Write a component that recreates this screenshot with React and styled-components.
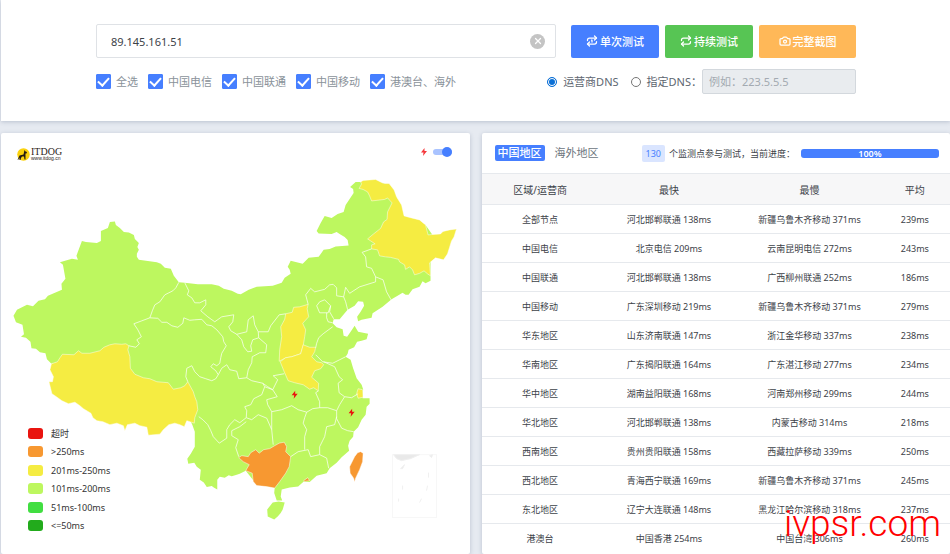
import React, { useState } from 'react';
import styled, { createGlobalStyle, css } from 'styled-components';
import { Repeat, Repeat1, Camera, X } from 'lucide-react';

const GlobalStyle = createGlobalStyle`
  * {
    box-sizing: border-box;
  }
  body {
    margin: 0;
    background: #e6eaf1;
    color: #3c4248;
    font-family: "Noto Sans", "Noto Sans CJK SC", sans-serif;
    font-size: 9px;
  }
  button, input {
    font-family: inherit;
  }
`;

const blue = '#467fff';

const palette = {
  timeout: '#e9140f',
  slow: '#f79831',
  medium: '#f5ec42',
  good: '#bdf75f',
  fast: '#41de41',
  best: '#22ab1c',
};

const Page = styled.div`
  display: flex;
  flex-direction: column;
  gap: 12px;
  min-height: 100vh;
  padding-left: 1px;
  overflow: hidden;
`;

const cardcss = css`
  background: #fff;
  box-shadow: 0 1px 4px rgba(60, 75, 110, 0.25);
`;

const SearchCard = styled.header`
  ${cardcss};
  padding: 24px 94px 27px 95px;
`;

const SearchInner = styled.div`
  display: flex;
  flex-direction: column;
  gap: 11px;
`;

const SearchRow = styled.form`
  display: flex;
  align-items: center;
  gap: 15px;
`;

const HostBox = styled.div`
  display: flex;
  align-items: center;
  flex: 1;
  height: 34px;
  padding: 0 10px 0 14px;
  border: 1px solid #dfe2e6;
  border-radius: 2px;
`;

const HostInput = styled.input`
  flex: 1;
  min-width: 0;
  padding: 0;
  border: 0;
  outline: none;
  color: #3c4248;
  font-size: 11px;
`;

const ClearButton = styled.button`
  display: flex;
  align-items: center;
  justify-content: center;
  width: 15px;
  height: 15px;
  padding: 0;
  border: 0;
  border-radius: 50%;
  background: #c4c4c4;
  color: #fff;
`;

const ButtonGroup = styled.div`
  display: flex;
  gap: 6px;
`;

const ActionButton = styled.button`
  display: flex;
  align-items: center;
  justify-content: center;
  gap: 2px;
  width: ${(props) => (props.$wide ? '97px' : '88px')};
  height: 33px;
  padding: 0;
  border: 0;
  border-radius: 2px;
  background: ${(props) => props.$color};
  color: #fff;
  font-size: 11px;
  font-weight: 500;
  cursor: pointer;
`;

const OptionRow = styled.div`
  display: flex;
  align-items: center;
  justify-content: space-between;
`;

const OptionGroup = styled.div`
  display: flex;
  align-items: center;
  gap: ${(props) => props.$gap};
`;

const Option = styled.label`
  display: flex;
  align-items: center;
  gap: ${(props) => (props.$radio ? '6px' : '5px')};
  color: ${(props) => (props.$radio ? '#5d6670' : '#8a929a')};
  font-size: 11px;
  line-height: 16px;
  white-space: nowrap;
`;

const Checkbox = styled.input`
  display: flex;
  justify-content: center;
  appearance: none;
  width: 15px;
  height: 15px;
  margin: 0;
  border-radius: 1px;
  border: 1px solid ${blue};
  background: #fff;
  &:checked {
    background: ${blue};
  }
  &:checked::after {
    content: "";
    width: 5px;
    height: 9px;
    border: solid #fff;
    border-width: 0 2px 2px 0;
    transform: rotate(42deg);
  }
`;

const Radio = styled.input`
  appearance: none;
  width: 10px;
  height: 10px;
  margin: 0;
  border: 1px solid #767676;
  border-radius: 50%;
  &:checked {
    border-color: #0a6fd6;
    background: #0a6fd6;
    box-shadow: inset 0 0 0 1px #fff;
  }
`;

// pulled left over the blank half of the full-width colon
const DnsInput = styled.input`
  width: 154px;
  height: 25px;
  margin-left: -12px;
  padding: 0 6px;
  border: 1px solid #d3d8dd;
  border-radius: 2px;
  background: #e9ecef;
  font-size: 11px;
  &::placeholder {
    color: #a3aab1;
  }
`;

const Panels = styled.main`
  display: grid;
  grid-template-columns: minmax(0, 1fr) minmax(0, 1fr);
  gap: 12px;
  flex: 1;
`;

const Panel = styled.section`
  ${cardcss};
  position: relative;
  border-radius: 2px;
`;

const MapSvg = styled.svg`
  display: block;
  width: 100%;
`;

const MapHead = styled.div`
  position: absolute;
  top: 14px;
  left: 16px;
  right: 18px;
  display: flex;
  align-items: center;
  justify-content: space-between;
`;

const Brand = styled.a`
  display: flex;
  align-items: center;
  gap: 1px;
  color: #2b2320;
  text-decoration: none;
`;

const BrandText = styled.span`
  display: flex;
  flex-direction: column;
  font-family: "Liberation Serif", serif;
  font-size: 10px;
  line-height: 9px;
  small {
    font-family: "Liberation Sans", sans-serif;
    font-size: 5px;
    line-height: 5px;
  }
`;

const SwitchLabel = styled.label`
  display: flex;
  align-items: center;
  gap: 5px;
  margin-bottom: 4px;
`;

const Switch = styled.input`
  appearance: none;
  display: flex;
  align-items: center;
  width: 19px;
  height: 6px;
  margin: 0;
  border-radius: 3px;
  background: ${(props) => (props.checked ? '#a9c3ff' : '#cfd4da')};
  &::after {
    content: "";
    flex: none;
    width: 10px;
    height: 10px;
    border-radius: 50%;
    margin-left: ${(props) => (props.checked ? '9px' : '0')};
    background: ${(props) => (props.checked ? blue : '#fff')};
  }
`;

const Legend = styled.ul`
  position: absolute;
  left: 27px;
  top: 293px;
  display: flex;
  flex-direction: column;
  gap: 4px;
  margin: 0;
  padding: 0;
  list-style: none;
`;

const LegendItem = styled.li`
  display: flex;
  align-items: center;
  gap: 8px;
  height: ${(props) => (props.$tall ? '15px' : '14px')};
  color: #333;
  &::before {
    content: "";
    width: 15px;
    height: 11px;
    border-radius: 3px;
    background: ${(props) => props.$color};
  }
`;

const ResultHead = styled.div`
  display: flex;
  align-items: center;
  height: 40px;
  padding: 0 11px 0 13px;
`;

const Tab = styled.button`
  height: 16px;
  padding: 0 3px;
  margin-right: 7px;
  border: 0;
  border-radius: 2px;
  background: ${(props) => (props.$active ? blue : 'none')};
  color: ${(props) => (props.$active ? '#fff' : '#6c757d')};
  font-size: 11px;
  font-weight: ${(props) => (props.$active ? 500 : 400)};
  line-height: 16px;
  white-space: nowrap;
  cursor: pointer;
`;

const Progress = styled.div`
  display: flex;
  align-items: center;
  flex: 1;
  gap: 4px;
  margin-left: 33px;
  white-space: nowrap;
`;

const Count = styled.span`
  padding: 0 4px;
  border-radius: 2px;
  background: #dae5ff;
  color: ${blue};
  line-height: 17px;
`;

const Bar = styled.div`
  flex: 1;
  margin-left: 2px;
  border-radius: 3px;
  background: #e9ecef;
`;

const BarFill = styled.div`
  height: 9px;
  border-radius: 3px;
  background: ${blue};
  color: #fff;
  font-weight: 600;
  line-height: 9px;
  text-align: center;
`;

const ResultTable = styled.table`
  width: 100%;
  border-collapse: collapse;
  table-layout: fixed;
  text-align: center;
  th, td {
    height: 29px;
    padding: 0;
    border-top: 1px solid #e6e9ed;
    white-space: nowrap;
  }
  th {
    height: 31px;
    background: #f7f7f8;
    font-size: 10px;
    font-weight: 400;
  }
`;

const Col = styled.col`
  width: ${(props) => props.$width};
`;

const Watermark = styled.div`
  position: absolute;
  right: 9px;
  bottom: 10px;
  color: #f00;
  font-family: Roboto, sans-serif;
  font-size: 37px;
  font-weight: 300;
  line-height: 40px;
`;

const carriers = ['全选', '中国电信', '中国联通', '中国移动', '港澳台、海外'];

const legend = [
  { color: palette.timeout, text: '超时' },
  { color: palette.slow, text: '>250ms' },
  { color: palette.medium, text: '201ms-250ms' },
  { color: palette.good, text: '101ms-200ms' },
  { color: palette.fast, text: '51ms-100ms' },
  { color: palette.best, text: '<=50ms' },
];

const results = [
  ['全部节点', '河北邯郸联通 138ms', '新疆乌鲁木齐移动 371ms', '239ms'],
  ['中国电信', '北京电信 209ms', '云南昆明电信 272ms', '243ms'],
  ['中国联通', '河北邯郸联通 138ms', '广西柳州联通 252ms', '186ms'],
  ['中国移动', '广东深圳移动 219ms', '新疆乌鲁木齐移动 371ms', '279ms'],
  ['华东地区', '山东济南联通 147ms', '浙江金华移动 337ms', '238ms'],
  ['华南地区', '广东揭阳联通 164ms', '广东湛江移动 277ms', '234ms'],
  ['华中地区', '湖南益阳联通 168ms', '河南郑州移动 299ms', '244ms'],
  ['华北地区', '河北邯郸联通 138ms', '内蒙古移动 314ms', '218ms'],
  ['西南地区', '贵州贵阳联通 158ms', '西藏拉萨移动 339ms', '250ms'],
  ['西北地区', '青海西宁联通 169ms', '新疆乌鲁木齐移动 371ms', '245ms'],
  ['东北地区', '辽宁大连联通 148ms', '黑龙江哈尔滨移动 318ms', '237ms'],
  ['港澳台', '中国香港 254ms', '中国台湾 306ms', '260ms'],
];

// outline of the mainland, clockwise from the northern tip of Xinjiang
const mainland = `M110 222L115 221.5 116 225 120 228 124 232 129 232.5 134 235 135 239 139 243 137.500 247
  139 250 137 254 137 257 139 260 157 262.5 161 264 165 268 171 269 174 276 179 282.500 185 283 198 284.500
  212 284.500 219 286 224 289 232 291 238 294 241 294.500 249 290 257 287 273 286 282 283 285 278 291 274 290 270
  288 267 291 261 303 264 309 258 319 257 324 250 330 249 336 246.500 349 245.500 348 240 345 237 340 234 337 232
  332 234 319 233.500 317 231 321 223 325 216 332 218 338 214 344 212 346 205 350 199 354 193 353.500 189 350.500 187
  356 182 361 182 384 183 394 190 404 216 426 225 440 245 431 262 431 276 431 281 426 283.500 423 281.500 420 287
  413 289.500 409 295 406 295 403 293 398 296 392 299.500 383 307 373 313.500 372 318 362 320 358.500 321.500 357.500 317
  361 312 364.500 306 363.500 302 358.500 301.500 355 306 348 310 345 313.500 340 319.500 334 319.500 333 323.500 337 327.500
  343 329.500 344 336 347.500 337 351 332 355 326 358.500 332 368.500 334 367 339.500 362 341 357.500 342 354.500 347.500
  349 350 348 354 346 357 351 360 353.500 368.500 357 378.500 362 385 363.500 389.500 363 398.500 370 398.500 370 404 367 407
  366 415 362 420 358.500 427.500 354 432 353.500 437 350 441 348.500 446 349.500 451 342 457.500 337 463 330 468.500 327 473.500
  317 476 310 482.500 303.500 482.500 298.500 487 290 488 282 490 281 497 282.500 501 277 501 274.500 493.500 275 488
  257 485 246 471 240 474 237 475 232 476.500 229 475.500 225 478 220 477 217.500 480 217.500 490 214 488 212 486.500 207 487.500
  204 483 200 480 201 470 197 467 194.500 463 188.500 464 187.500 459 191 454 195 447 195 432 192.500 425 180 400
  60 362 51.500 364 47 359.500 45.500 353.500 40 352.500 36 349 31.500 348.500 30.500 342 26 338 21 337 24 334.500 22.500 325
  16 322.500 13.500 316 17 310 27 305 33 306.500 38.500 301 45 299.500 48 296 62 290 61.500 284 65.500 279 63 265 60 262.500
  72 259 78 260 76.500 256 82 241 86 242 97 243 101 241 101 231 108 228Z`;

const hainan = 'M279 502L285 503 283 510 281 513.500 278 517 274.500 520 268 517 267.500 510 273 503Z';

const provinces = [
  {
    name: '西藏',
    color: palette.medium,
    d: `M129 346L126 344 122 344.500 115 344 110 345 104 347.500 100 351 90 353.500 82 353.500 78.500 351 74 355 62.500 354.500
      60 358 57.500 362 51.500 364 50 370 53.500 377 52.500 382 49 382 52 394 55 396 62 401 68.500 404 75 402.500 80 406 83.500 409
      91 413.500 93 418 97 421 103 422 110 425 117 423.500 123.500 426 125 431 127.500 425 135 423.500 140 426 147 427.500 148.500 435.500
      160 434.500 163.500 430 169 425 175 423.500 180 425 184.500 427 187 421 194.500 423.500 195 418 198 410 197 402 195 397 193.500 392
      188 382 185 386 181 388 173.500 389.500 168.500 383 157 382 150 379 143.500 378 135 374.500 130.500 368.500 130 357 128 350Z`,
  },
  {
    name: '黑龙江',
    color: palette.medium,
    d: `M361 182L363.500 180.500 376 179.500 384 183.500 389.500 183.500 394.500 190 397 197 402 205 404.500 216 412 218 420 220 426 225
      428.500 235 434 234.500 441 234 443.500 231.500 450 230 457 229 454.500 237 452 241 450 247.500 448 254 444 260 436 258 430 263
      431 276 428 274 424.500 271 420 273.500 415 275 413 270 410 267 406 269.500 405 265 400 262 399 259.500 391 257.500 386 257 380 256
      378 250 372 249 372 245 375.500 244 371 241 368 239 374 234 381 228.500 384 222 387.500 219.500 388 212 391 206 392.500 203
      388 198 385 199.500 372 201 370 196 368 192 363.500 189.500 359.500 188.500 362 184Z`,
  },
  {
    name: '山西',
    color: palette.medium,
    d: `M308.500 304.500L300 307 294 307.500 292.500 312.500 286 314 285 319.500 281 327 282 337 280 350 279.500 361.500 286 358 292 357
      301 354 303.500 346 305 337 306 330 303 323.500 309 317 307.500 309Z`,
  },
  {
    name: '河南',
    color: palette.medium,
    d: `M280.500 362L286 358 292 357 301 354 303.500 345 310 347.500 316 347.500 315 352 312 357 317 362 322 363 324 365 321 369
      315 371 312 377.500 319 383.500 318.500 391 314 388 310 389.500 303.500 385 295 383 288.500 381 284.500 372Z`,
  },
  { name: '上海', color: palette.medium, d: 'M358.500 389L363 390 363.500 397.500 358.500 398.500 357 394Z' },
  {
    name: '广西',
    color: palette.slow,
    d: `M284.500 442.500L287 447 286 452 291 457 289.500 467 286 473.500 280 482 275 488.500 267 487 257 486 253.500 482 252.500 473.500
      246 471 249.500 465 243.500 462 239 458 242 456 248.500 457 251 453 256 450 259.500 453.500 264 450 270 449 275 446 279.500 443.500Z`,
  },
  {
    name: '台湾',
    color: palette.slow,
    d: 'M361 452L363.500 453.500 363 462 360 470 356 478.500 355 482.500 354 478.500 350.500 473.500 350 467 355 457 358 453Z',
  },
  { name: '香港', color: palette.slow, d: 'M304 481L308 478 310 481 304 482Z' },
];

const borders = [
  // Xinjiang to Gansu and Qinghai
  'M179 282.500L176 288 173 291 169 293 165 295 160 302 155 305 152.500 311 150 318 142 321 134 324 138 330 141.500 337 137 340 139.500 344 136 347.500 129 346',
  // Qinghai
  'M150 318L158 318.500 162 322.500 167 322.500 172 326 178 327.500 183 323.500 184 318 190 320.500 195 320 202 319.500 207 325 212 326 217 330 223 337 224 342 226.500 346 222 353.500 221 358 220 363.500 217 366 213.500 364 211 367 216 371 218.500 375 216 379 212 381 206 379 200 377 195 372 192 366 187 368.500 186 377 188 382',
  // Gansu to Inner Mongolia and Ningxia
  'M185 283L189 291 187.500 295 192 298 195 303 200 303 206 300 206 305 201 311 208 317 215 322 222 317 234 315 233 322 229 327 231 331 237 334.500 247 332 248.500 320 253.500 316 255 325 258.500 332 268.500 332 271 326 279.500 315 286 314',
  'M237 334.500L242 340 244 347 248 352 252 351.500 251 346 253 340 259 338 258.500 332M259 338L267 345 266 353 260 353 252.500 357 252 363 248.500 370 247 378',
  // Sichuan
  'M218.500 375L222 368.500 227 365 230 370 237 371.500 239 379 247 378 252 381 263 383.500 265 387 262 395 254 399 251 405 245 407 247 411 246.500 418 M199 417L203 420 208 425 211 431 213.500 437 219.500 443.500 227 438.500 227 430 230 425 235 420 240 423 246.500 418',
  // Chongqing and Guizhou
  'M263 383.500L268 387 273 390 278 380 273.500 376 284.500 374M265 387L273 390 277.500 397 267 400 268 405 272 412 272 430 273.500 445',
  'M246.500 418L252 420 258.500 415 267 418.500 272 430M246.500 422L240 427 232 431 232 436 238.500 440 236 448 239 457',
  // Hubei, Hunan and Anhui
  'M272 412L282 410 292 406 298.500 410 307 412.500 313 409 320 408 328 408 337 411M319 391L316 393 320 402 320 408M307 412.500L305 418 303.500 423.500 307 430 305 437 305 450',
  // Guangdong and Fujian
  'M291 457L298.500 452 308.500 450 311 457 320 455 327 458.500 329 468.500M337 417L335 425 327 427 325 437 320 447 320 455',
  // Zhejiang and Jiangsu
  'M337 411L337 419 342 428.500 348 431 354 432M337 411L340 405 345 397 352 398 358.500 394M345 397L339.500 393 338.500 383.500 343 380 339.500 377 335 367 324 362',
  // Shandong
  'M316 355L323 362 333 363.500 340 360 346 357M333 327L323.500 334 319 338 317 343.500 316 348',
  // Hebei, Beijing and Tianjin
  'M308.500 304.500L306 295 311 288.500 315 292 325 289.500 330 285 333.500 284.500 337 288 337 296 344 297 346 302 348 310',
  'M317 306L320 302 325 300 331 306 328.500 313 320 313ZM331 306L330 312 334 319M327 313L327 318 328.500 322 333 323',
  // Liaoning and Jilin
  'M344 297L346 287.500 350 293.500 360 287 376 282 376 277 372 268.500 367 267 366 257 362.500 252.500 372 249M376 277L383.500 280 387 292 391.500 300',
];

const bolt = 'M0.500 -4L-3 0.500H-0.500L-1 4L3 -1H0.500Z';

const ChinaMap = () => (
  <MapSvg viewBox="1 133 469 421" role="img" aria-label="中国地区">
    <path d={mainland} fill={palette.good} />
    <path d={hainan} fill={palette.good} />
    {provinces.map((item) => (
      <path key={item.name} d={item.d} fill={item.color} stroke="#fff" strokeOpacity="0.600" strokeWidth="0.800" />
    ))}
    {borders.map((d) => (
      <path key={d} d={d} fill="none" stroke="#fff" strokeOpacity="0.700" strokeWidth="1" strokeLinejoin="round" />
    ))}
    <path d={bolt} transform="translate(295 395)" fill={palette.timeout} />
    <path d={bolt} transform="translate(352 413)" fill={palette.timeout} />
    <rect x="393" y="455" width="44" height="63" fill="none" stroke="#f7f7f7" />
    <path d="M394 455H420L411 459 402 461 397 459ZM430 456L433 455 432 458ZM401 469L405 465 403 469ZM429 473V478M403 486V490M428 486L427 491M399 499V502M422 499L420 503" fill="#e9e9e9" stroke="#f0f0f0" strokeWidth="1" />
  </MapSvg>
);

const DogLogo = () => (
  <svg width="13" height="13" viewBox="0 0 26 26" aria-hidden="true">
    <circle cx="13" cy="13" r="12.500" fill="#fbd20c" />
    <path d="M15 4L17 7 20 8 19 11 17 11 17 15 17 23H15L14 17 10 17 8 20 7 24H5L5 19 3 23 1 24 5 15 13 13Z" fill="#241c12" />
  </svg>
);

const App = () => {
  const [host, setHost] = useState('89.145.161.51');
  const [dns, setDns] = useState('isp');
  const [region, setRegion] = useState('china');
  const [live, setLive] = useState(true);
  const progress = 100;

  return (
    <>
      <GlobalStyle />
      <Page>
        <SearchCard>
          <SearchInner>
            <SearchRow onSubmit={(e) => e.preventDefault()}>
              <HostBox>
                <HostInput aria-label="host" value={host} onChange={(e) => setHost(e.target.value)} />
                <ClearButton type="button" aria-label="clear" onClick={() => setHost('')}>
                  <X size={10} strokeWidth={3} />
                </ClearButton>
              </HostBox>
              <ButtonGroup>
                <ActionButton type="submit" $color={blue}>
                  <Repeat1 size={12} strokeWidth={2.5} />
                  单次测试
                </ActionButton>
                <ActionButton type="button" $color="#57c554">
                  <Repeat size={12} strokeWidth={2.5} />
                  持续测试
                </ActionButton>
                <ActionButton type="button" $color="#ffb858" $wide>
                  <Camera size={12} strokeWidth={2.5} />
                  完整截图
                </ActionButton>
              </ButtonGroup>
            </SearchRow>
            <OptionRow>
              <OptionGroup $gap="10px">
                {carriers.map((name) => (
                  <Option key={name}>
                    <Checkbox type="checkbox" defaultChecked />
                    {name}
                  </Option>
                ))}
              </OptionGroup>
              <OptionGroup $gap="12px">
                <Option $radio>
                  <Radio type="radio" name="dns" checked={dns === 'isp'} onChange={() => setDns('isp')} />
                  运营商DNS
                </Option>
                <Option $radio>
                  <Radio type="radio" name="dns" checked={dns === 'custom'} onChange={() => setDns('custom')} />
                  指定DNS：
                </Option>
                <DnsInput aria-label="DNS" placeholder="例如：223.5.5.5" disabled={dns === 'isp'} />
              </OptionGroup>
            </OptionRow>
          </SearchInner>
        </SearchCard>
        <Panels>
          <Panel>
            <ChinaMap />
            <MapHead>
              <Brand href="#">
                <DogLogo />
                <BrandText>
                  ITDOG
                  <small>www.itdog.cn</small>
                </BrandText>
              </Brand>
              <SwitchLabel>
                <svg width="8" height="10" viewBox="-4 -5 8 10" aria-hidden="true">
                  <path d={bolt} fill="#f5383c" />
                </svg>
                <Switch type="checkbox" role="switch" aria-label="live" checked={live} onChange={() => setLive(!live)} />
              </SwitchLabel>
            </MapHead>
            <Legend>
              {legend.map((item, i) => (
                <LegendItem key={item.text} $color={item.color} $tall={i % 2 === 1}>
                  {item.text}
                </LegendItem>
              ))}
            </Legend>
          </Panel>
          <Panel>
            <ResultHead>
              <Tab $active={region === 'china'} onClick={() => setRegion('china')}>中国地区</Tab>
              <Tab $active={region === 'world'} onClick={() => setRegion('world')}>海外地区</Tab>
              <Progress>
                <Count>130</Count>
                <span>个监测点参与测试，当前进度：</span>
                <Bar>
                  <BarFill style={{ width: `${progress}%` }}>{progress}%</BarFill>
                </Bar>
              </Progress>
            </ResultHead>
            <ResultTable>
              <colgroup>
                <Col $width="25%" />
                <Col $width="30%" />
                <Col $width="30%" />
                <Col $width="15%" />
              </colgroup>
              <thead>
                <tr>
                  <th>区域/运营商</th>
                  <th>最快</th>
                  <th>最慢</th>
                  <th>平均</th>
                </tr>
              </thead>
              <tbody>
                {results.map((row) => (
                  <tr key={row[0]}>
                    {row.map((cell, i) => (
                      <td key={i}>{cell}</td>
                    ))}
                  </tr>
                ))}
              </tbody>
            </ResultTable>
            <Watermark>ivpsr.com</Watermark>
          </Panel>
        </Panels>
      </Page>
    </>
  );
};

export default App;
